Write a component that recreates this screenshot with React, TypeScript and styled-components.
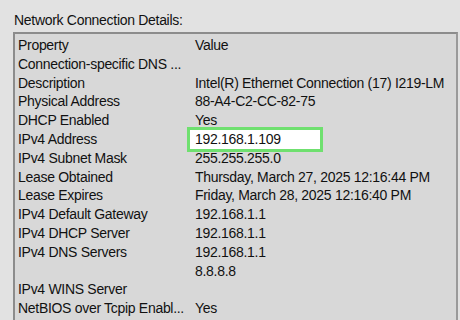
import React from "react";
import styled, { createGlobalStyle } from "styled-components";

const Global = createGlobalStyle`
  html, body { margin: 0; padding: 0; }
  body { width: 460px; height: 320px; overflow: hidden; background: #e2e2e2; }
`;

const Window = styled.div`
  width: 460px;
  height: 320px;
  box-sizing: border-box;
  padding: 9px 0 0 13px;
  background: #e2e2e2;
  font-family: "Liberation Sans", Arial, sans-serif;
  font-size: 14px;
  letter-spacing: -0.3px;
  color: #111;
  overflow: hidden;
`;

const Title = styled.div`
  height: 22px;
  line-height: 23px;
  padding-left: 1px;
`;

const Frame = styled.div`
  margin-top: 1px;
  width: 445px;
  height: 300px;
  box-sizing: border-box;
  border-top: 2px solid #8c8c8c;
  border-left: 2px solid #8c8c8c;
  border-right: 2px solid #9a9a9a;
  background: #d8d8d8;
  padding: 2px 0 0 3px;
`;

const Row = styled.div`
  display: grid;
  grid-template-columns: 177px 1fr;
  height: 18.8px;
  line-height: 18.8px;
  white-space: nowrap;
`;

const Cell = styled.div`
  overflow: hidden;
`;

const ValueCell = styled.div<{ $highlight?: boolean }>`
  position: relative;
  white-space: nowrap;
  ${(p) =>
    p.$highlight &&
    `
    &::before {
      content: "";
      position: absolute;
      left: -8px;
      top: -3px;
      width: 130px;
      height: 19px;
      background: #fff;
      border: 3px solid #6fe06f;
      z-index: 0;
    }
  `}
`;

const ValueText = styled.span`
  position: relative;
  z-index: 1;
`;

const rows: [string, string, boolean?][] = [
  ["Property", "Value"],
  ["Connection-specific DNS ...", ""],
  ["Description", "Intel(R) Ethernet Connection (17) I219-LM"],
  ["Physical Address", "88-A4-C2-CC-82-75"],
  ["DHCP Enabled", "Yes"],
  ["IPv4 Address", "192.168.1.109", true],
  ["IPv4 Subnet Mask", "255.255.255.0"],
  ["Lease Obtained", "Thursday, March 27, 2025 12:16:44 PM"],
  ["Lease Expires", "Friday, March 28, 2025 12:16:40 PM"],
  ["IPv4 Default Gateway", "192.168.1.1"],
  ["IPv4 DHCP Server", "192.168.1.1"],
  ["IPv4 DNS Servers", "192.168.1.1"],
  ["", "8.8.8.8"],
  ["IPv4 WINS Server", ""],
  ["NetBIOS over Tcpip Enabl...", "Yes"],
];

export default function App() {
  return (
    <>
      <Global />
      <Window>
        <Title>Network Connection Details:</Title>
        <Frame>
          {rows.map(([k, v, h], i) => (
            <Row key={i}>
              <Cell>{k}</Cell>
              <ValueCell $highlight={h}>
                <ValueText>{v}</ValueText>
              </ValueCell>
            </Row>
          ))}
        </Frame>
      </Window>
    </>
  );
}
